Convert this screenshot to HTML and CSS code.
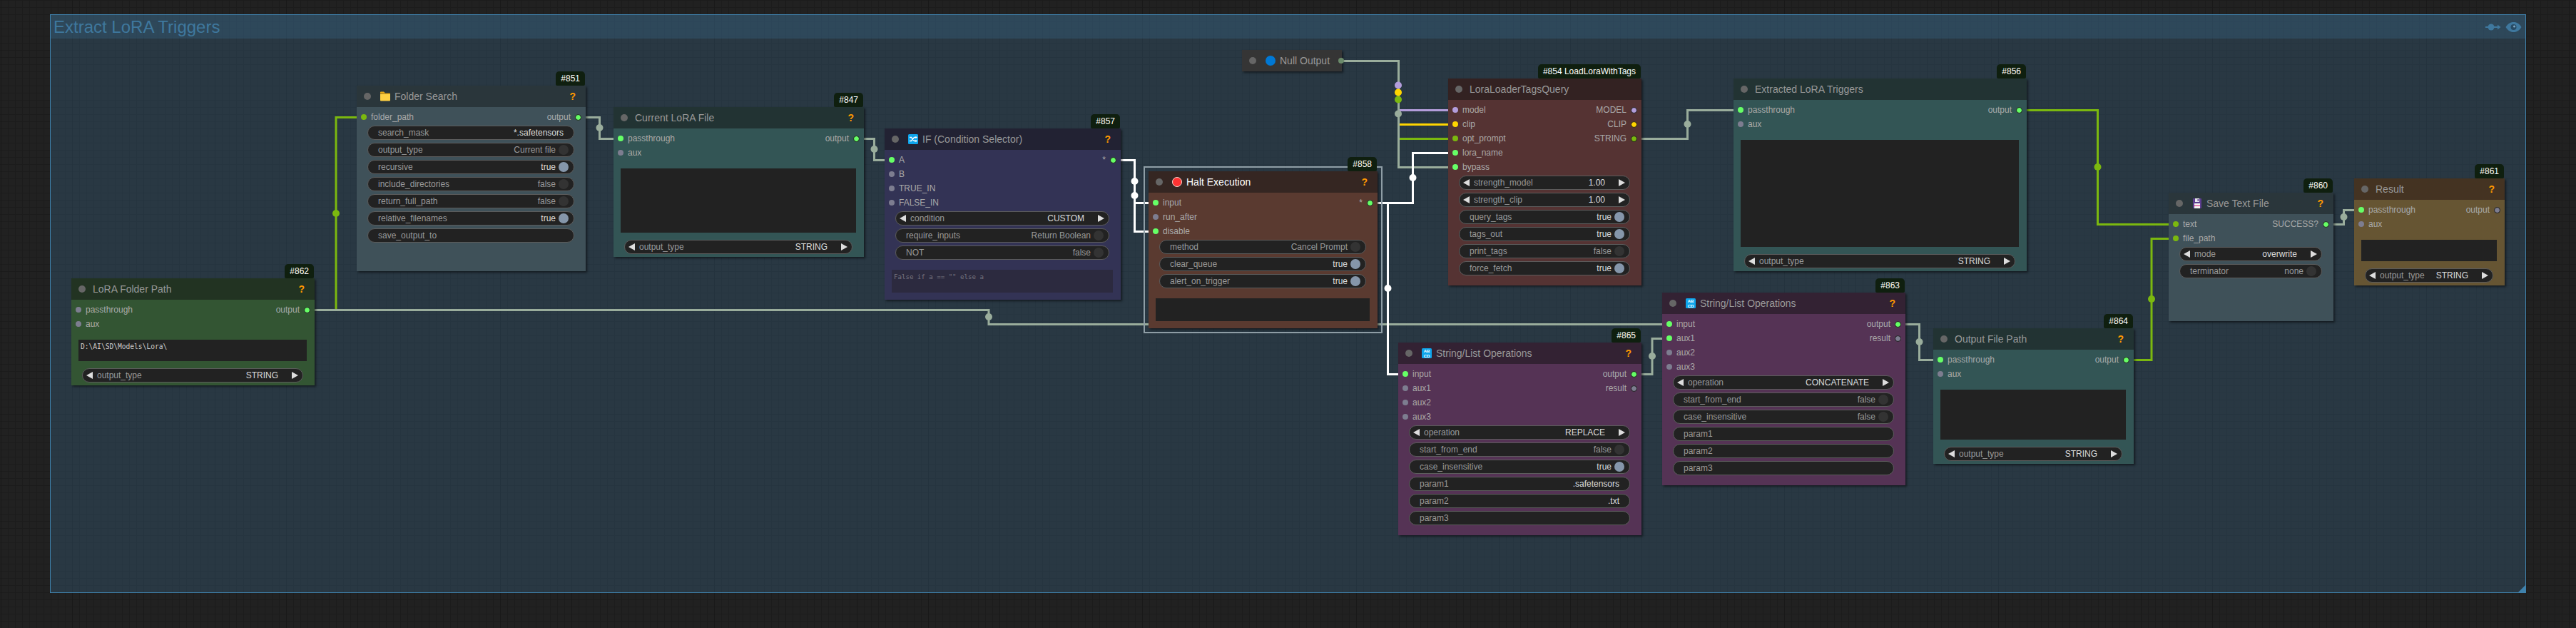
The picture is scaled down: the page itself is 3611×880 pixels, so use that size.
FILE: index.html
```html
<!DOCTYPE html>
<html lang="en">
<head>
    <meta charset="UTF-8">
    <title>Extract LoRA Triggers</title>
    <link rel="stylesheet" href="styles.css">
</head>
<body>
<main class="canvas">

    <section class="group">
        <div class="group-title">
            <span>Extract LoRA Triggers</span>
            <span class="group-icons">
                <svg width="22" height="12" viewBox="0 0 22 12"><path d="M0 6H20" stroke="#3f789e" stroke-width="2"/><circle cx="8" cy="6" r="4.5" fill="#3f789e"/><path d="M17 2.5L21.500 6L17 9.500Z" fill="#3f789e"/></svg>
                <svg width="23" height="16" viewBox="0 0 23 16"><path d="M0.500 8C4 2.500 8 1 11.500 1S19 2.500 22.500 8C19 13.500 15 15 11.500 15S4 13.500 0.500 8Z" fill="#3f789e"/><circle cx="11.500" cy="8" r="4" fill="#274a63"/><circle cx="12.500" cy="7" r="1.500" fill="#7fa8c4"/></svg>
            </span>
        </div>
    </section>

    <!-- links are drawn under the nodes -->
    <svg class="wires" width="3611" height="880" viewBox="0 0 3611 880">
        <path class="wire green" d="M441 434.500H471V164.500H500"/>
        <circle class="mid green" cx="471" cy="299" r="5"/>
        <path class="wire grey" d="M441 434.500H1386V454.500H2330"/>
        <circle class="mid grey" cx="1386" cy="444" r="5"/>
        <path class="wire grey" d="M821 164.500H840.500V194.500H860"/>
        <circle class="mid grey" cx="840.500" cy="179" r="5"/>
        <path class="wire grey" d="M1211 194.500H1225.500V224.500H1240"/>
        <circle class="mid grey" cx="1225.500" cy="209" r="5"/>

        <path class="wire white" d="M1571 224.500H1590.500V284.500H1610"/>
        <path class="wire white" d="M1571 224.500H1590.500V324.500H1610"/>
        <circle class="mid white" cx="1590.500" cy="254" r="5"/>
        <circle class="mid white" cx="1590.500" cy="274" r="5"/>

        <path class="wire purple" d="M1881 85.500H1960.500V154.500H2030"/>
        <path class="wire yellow" d="M1881 85.500H1960.500V174.500H2030"/>
        <path class="wire green" d="M1881 85.500H1960.500V194.500H2030"/>
        <path class="wire grey" d="M1881 85.500H1960.500V234.500H2030"/>
        <circle class="mid purple" cx="1960" cy="119.500" r="5"/>
        <circle class="mid yellow" cx="1960" cy="129.500" r="5"/>
        <circle class="mid green" cx="1960" cy="139.500" r="5"/>
        <circle class="mid grey" cx="1960" cy="159.500" r="5"/>

        <path class="wire white" d="M1931 284.500H1980.500V214.500H2030"/>
        <circle class="mid white" cx="1980.500" cy="249" r="5"/>
        <path class="wire white" d="M1931 284.500H1945.500V524.500H1960"/>
        <circle class="mid white" cx="1945.500" cy="404" r="5"/>

        <path class="wire grey" d="M2301 194.500H2365.500V154.500H2430"/>
        <circle class="mid grey" cx="2365.500" cy="174" r="5"/>
        <path class="wire green" d="M2841 154.500H2940.500V314.500H3040"/>
        <circle class="mid green" cx="2940.500" cy="234" r="5"/>
        <path class="wire grey" d="M2301 524.500H2316V474.500H2330"/>
        <circle class="mid grey" cx="2316" cy="499" r="5"/>
        <path class="wire grey" d="M2671 454.500H2690.500V504.500H2710"/>
        <circle class="mid grey" cx="2690.500" cy="479" r="5"/>
        <path class="wire green" d="M2991 504.500H3016V334.500H3040"/>
        <circle class="mid green" cx="3016" cy="419" r="5"/>
        <path class="wire grey" d="M3271 314.500H3285.500V294.500H3300"/>
        <circle class="mid grey" cx="3285.500" cy="304" r="5"/>
    </svg>

    <!-- #862 -->
    <article class="node c-green n862">
        <span class="badge">#862</span>
        <header class="node-title"><i class="title-dot"></i><span>LoRA Folder Path</span><b class="help">?</b></header>
        <div class="slots">
            <div class="slot"><i class="pin off"></i><span>passthrough</span><span class="out-label">output</span><i class="pin live out"></i></div>
            <div class="slot"><i class="pin off"></i><span>aux</span></div>
        </div>
        <div class="textbox">D:\AI\SD\Models\Lora\</div>
        <div class="widgets after-text">
            <div class="w combo"><span>output_type</span><span class="val">STRING</span></div>
        </div>
    </article>

    <!-- #851 -->
    <article class="node c-pale n851">
        <span class="badge">#851</span>
        <header class="node-title"><i class="title-dot"></i>
            <svg class="emoji" viewBox="0 0 14 14"><path d="M0 3.500V1.500Q0 .5 1 .5H5L7 2.500H13Q14 2.500 14 3.500V4Z" fill="#e8a917"/><path d="M0 4H14V12.500Q14 13.500 13 13.500H1Q0 13.500 0 12.500Z" fill="#ffd042"/></svg>
            <span>Folder Search</span><b class="help">?</b></header>
        <div class="slots">
            <div class="slot"><i class="pin str"></i><span>folder_path</span><span class="out-label">output</span><i class="pin live out"></i></div>
        </div>
        <div class="widgets">
            <div class="w text"><span>search_mask</span><span class="val">*.safetensors</span></div>
            <div class="w toggle"><span>output_type</span><span class="val dim">Current file</span><i class="knob"></i></div>
            <div class="w toggle"><span>recursive</span><span class="val">true</span><i class="knob on"></i></div>
            <div class="w toggle"><span>include_directories</span><span class="val dim">false</span><i class="knob"></i></div>
            <div class="w toggle"><span>return_full_path</span><span class="val dim">false</span><i class="knob"></i></div>
            <div class="w toggle"><span>relative_filenames</span><span class="val">true</span><i class="knob on"></i></div>
            <div class="w text"><span>save_output_to</span></div>
        </div>
    </article>

    <!-- #847 -->
    <article class="node c-cyan n847">
        <span class="badge">#847</span>
        <header class="node-title"><i class="title-dot"></i><span>Current LoRA File</span><b class="help">?</b></header>
        <div class="slots">
            <div class="slot"><i class="pin live"></i><span>passthrough</span><span class="out-label">output</span><i class="pin live out"></i></div>
            <div class="slot"><i class="pin off"></i><span>aux</span></div>
        </div>
        <div class="textbox"></div>
        <div class="widgets after-text">
            <div class="w combo"><span>output_type</span><span class="val">STRING</span></div>
        </div>
    </article>

    <!-- #857 -->
    <article class="node c-blue n857">
        <span class="badge">#857</span>
        <header class="node-title"><i class="title-dot"></i>
            <svg class="emoji" viewBox="0 0 14 14"><rect width="14" height="14" rx="1.500" fill="#0ea5ec"/><path d="M2 4.500H4.500L8.500 9.500H11M2 9.500H4.500L8.500 4.500H11" stroke="#fff" stroke-width="1.300" fill="none"/><path d="M10.500 2.800L13 4.500L10.500 6.200ZM10.500 7.800L13 9.500L10.500 11.200Z" fill="#fff"/></svg>
            <span>IF (Condition Selector)</span><b class="help">?</b></header>
        <div class="slots">
            <div class="slot"><i class="pin live"></i><span>A</span><span class="out-label">*</span><i class="pin live out"></i></div>
            <div class="slot"><i class="pin off"></i><span>B</span></div>
            <div class="slot"><i class="pin off"></i><span>TRUE_IN</span></div>
            <div class="slot"><i class="pin off"></i><span>FALSE_IN</span></div>
        </div>
        <div class="widgets">
            <div class="w combo"><span>condition</span><span class="val">CUSTOM</span></div>
            <div class="w toggle"><span>require_inputs</span><span class="val dim">Return Boolean</span><i class="knob"></i></div>
            <div class="w toggle"><span>NOT</span><span class="val dim">false</span><i class="knob"></i></div>
        </div>
        <div class="textbox after-widgets faded">False if a == "" else a</div>
    </article>

    <!-- #858, selected -->
    <div class="selection"></div>
    <article class="node c-halt n858">
        <span class="badge">#858</span>
        <header class="node-title"><i class="title-dot"></i>
            <svg class="emoji" viewBox="0 0 14 14"><circle cx="7" cy="7" r="6.500" fill="#f33" stroke="#f3d9d0" stroke-width="1"/></svg>
            <span class="selected-title">Halt Execution</span><b class="help">?</b></header>
        <div class="slots">
            <div class="slot"><i class="pin live"></i><span>input</span><span class="out-label">*</span><i class="pin live out"></i></div>
            <div class="slot"><i class="pin off"></i><span>run_after</span></div>
            <div class="slot"><i class="pin live"></i><span>disable</span></div>
        </div>
        <div class="widgets">
            <div class="w toggle"><span>method</span><span class="val dim">Cancel Prompt</span><i class="knob"></i></div>
            <div class="w toggle"><span>clear_queue</span><span class="val">true</span><i class="knob on"></i></div>
            <div class="w toggle"><span>alert_on_trigger</span><span class="val">true</span><i class="knob on"></i></div>
        </div>
        <div class="textbox after-widgets"></div>
    </article>

    <!-- collapsed null node -->
    <article class="node collapsed n-null">
        <header class="node-title"><i class="title-dot"></i>
            <svg class="emoji" viewBox="0 0 14 14"><circle cx="7" cy="7" r="7" fill="#0078d4"/></svg>
            <span>Null Output</span></header>
        <i class="pin null-pin"></i>
    </article>

    <!-- #854 -->
    <article class="node c-red n854">
        <span class="badge">#854 LoadLoraWithTags</span>
        <header class="node-title"><i class="title-dot"></i><span>LoraLoaderTagsQuery</span></header>
        <div class="slots">
            <div class="slot"><i class="pin model"></i><span>model</span><span class="out-label">MODEL</span><i class="pin model out"></i></div>
            <div class="slot"><i class="pin clip"></i><span>clip</span><span class="out-label">CLIP</span><i class="pin clip out"></i></div>
            <div class="slot"><i class="pin str"></i><span>opt_prompt</span><span class="out-label">STRING</span><i class="pin str out"></i></div>
            <div class="slot"><i class="pin live"></i><span>lora_name</span></div>
            <div class="slot"><i class="pin live"></i><span>bypass</span></div>
        </div>
        <div class="widgets">
            <div class="w combo"><span>strength_model</span><span class="val">1.00</span></div>
            <div class="w combo"><span>strength_clip</span><span class="val">1.00</span></div>
            <div class="w toggle"><span>query_tags</span><span class="val">true</span><i class="knob on"></i></div>
            <div class="w toggle"><span>tags_out</span><span class="val">true</span><i class="knob on"></i></div>
            <div class="w toggle"><span>print_tags</span><span class="val dim">false</span><i class="knob"></i></div>
            <div class="w toggle"><span>force_fetch</span><span class="val">true</span><i class="knob on"></i></div>
        </div>
    </article>

    <!-- #856 -->
    <article class="node c-cyan n856">
        <span class="badge">#856</span>
        <header class="node-title"><i class="title-dot"></i><span>Extracted LoRA Triggers</span></header>
        <div class="slots">
            <div class="slot"><i class="pin live"></i><span>passthrough</span><span class="out-label">output</span><i class="pin live out"></i></div>
            <div class="slot"><i class="pin off"></i><span>aux</span></div>
        </div>
        <div class="textbox"></div>
        <div class="widgets after-text">
            <div class="w combo"><span>output_type</span><span class="val">STRING</span></div>
        </div>
    </article>

    <!-- #865 -->
    <article class="node c-purple n865">
        <span class="badge">#865</span>
        <header class="node-title"><i class="title-dot"></i>
            <svg class="emoji" viewBox="0 0 14 14"><rect width="14" height="14" rx="1.500" fill="#0ea5ec"/><text class="emoji-text" x="7" y="6.200">AB</text><text class="emoji-text" x="7" y="12.700">CD</text></svg>
            <span>String/List Operations</span><b class="help">?</b></header>
        <div class="slots">
            <div class="slot"><i class="pin live"></i><span>input</span><span class="out-label">output</span><i class="pin live out"></i></div>
            <div class="slot"><i class="pin off"></i><span>aux1</span><span class="out-label">result</span><i class="pin off out"></i></div>
            <div class="slot"><i class="pin off"></i><span>aux2</span></div>
            <div class="slot"><i class="pin off"></i><span>aux3</span></div>
        </div>
        <div class="widgets">
            <div class="w combo"><span>operation</span><span class="val">REPLACE</span></div>
            <div class="w toggle"><span>start_from_end</span><span class="val dim">false</span><i class="knob"></i></div>
            <div class="w toggle"><span>case_insensitive</span><span class="val">true</span><i class="knob on"></i></div>
            <div class="w text"><span>param1</span><span class="val">.safetensors</span></div>
            <div class="w text"><span>param2</span><span class="val">.txt</span></div>
            <div class="w text"><span>param3</span></div>
        </div>
    </article>

    <!-- #863 -->
    <article class="node c-purple n863">
        <span class="badge">#863</span>
        <header class="node-title"><i class="title-dot"></i>
            <svg class="emoji" viewBox="0 0 14 14"><rect width="14" height="14" rx="1.500" fill="#0ea5ec"/><text class="emoji-text" x="7" y="6.200">AB</text><text class="emoji-text" x="7" y="12.700">CD</text></svg>
            <span>String/List Operations</span><b class="help">?</b></header>
        <div class="slots">
            <div class="slot"><i class="pin live"></i><span>input</span><span class="out-label">output</span><i class="pin live out"></i></div>
            <div class="slot"><i class="pin live"></i><span>aux1</span><span class="out-label">result</span><i class="pin off out"></i></div>
            <div class="slot"><i class="pin off"></i><span>aux2</span></div>
            <div class="slot"><i class="pin off"></i><span>aux3</span></div>
        </div>
        <div class="widgets">
            <div class="w combo"><span>operation</span><span class="val">CONCATENATE</span></div>
            <div class="w toggle"><span>start_from_end</span><span class="val dim">false</span><i class="knob"></i></div>
            <div class="w toggle"><span>case_insensitive</span><span class="val dim">false</span><i class="knob"></i></div>
            <div class="w text"><span>param1</span></div>
            <div class="w text"><span>param2</span></div>
            <div class="w text"><span>param3</span></div>
        </div>
    </article>

    <!-- #864 -->
    <article class="node c-cyan n864">
        <span class="badge">#864</span>
        <header class="node-title"><i class="title-dot"></i><span>Output File Path</span><b class="help">?</b></header>
        <div class="slots">
            <div class="slot"><i class="pin live"></i><span>passthrough</span><span class="out-label">output</span><i class="pin live out"></i></div>
            <div class="slot"><i class="pin off"></i><span>aux</span></div>
        </div>
        <div class="textbox"></div>
        <div class="widgets after-text">
            <div class="w combo"><span>output_type</span><span class="val">STRING</span></div>
        </div>
    </article>

    <!-- #860 -->
    <article class="node c-pale n860">
        <span class="badge">#860</span>
        <header class="node-title"><i class="title-dot"></i>
            <svg class="emoji" viewBox="0 0 14 14"><rect x="1" y="0" width="12" height="14" rx="1" fill="#5c3d8f"/><rect x="3" y="7" width="8" height="7" fill="#f4f4f4"/><rect x="3" y="9.500" width="8" height="1.500" fill="#e0569a"/><rect x="4" y="0" width="6" height="5" fill="#e8e8ee"/><rect x="7.500" y="1" width="1.500" height="3" fill="#5c3d8f"/></svg>
            <span>Save Text File</span><b class="help">?</b></header>
        <div class="slots">
            <div class="slot"><i class="pin str"></i><span>text</span><span class="out-label">SUCCESS?</span><i class="pin live out"></i></div>
            <div class="slot"><i class="pin str"></i><span>file_path</span></div>
        </div>
        <div class="widgets">
            <div class="w combo"><span>mode</span><span class="val">overwrite</span></div>
            <div class="w toggle"><span>terminator</span><span class="val dim">none</span><i class="knob"></i></div>
        </div>
    </article>

    <!-- #861 -->
    <article class="node c-yellow n861">
        <span class="badge">#861</span>
        <header class="node-title"><i class="title-dot"></i><span>Result</span><b class="help">?</b></header>
        <div class="slots">
            <div class="slot"><i class="pin live"></i><span>passthrough</span><span class="out-label">output</span><i class="pin off out"></i></div>
            <div class="slot"><i class="pin off"></i><span>aux</span></div>
        </div>
        <div class="textbox"></div>
        <div class="widgets after-text">
            <div class="w combo"><span>output_type</span><span class="val">STRING</span></div>
        </div>
    </article>

</main>
</body>
</html>
```
FILE: styles.css
```css
* {
    box-sizing: border-box;
}
body {
    margin: 0;
    background-color: #212121;
    font-family: "Liberation Sans", Arial, sans-serif;
    font-size: 12px;
    color: #999;
}
.canvas {
    position: relative;
    width: 3611px;
    height: 880px;
    overflow: hidden;
    background-color: #212121;
    background-image:
        linear-gradient(to right, #191919 1px, transparent 1px),
        linear-gradient(to bottom, #1b1b1b 1px, transparent 1px),
        linear-gradient(to right, #1c1c1c 1px, transparent 1px),
        linear-gradient(to bottom, #1c1c1c 1px, transparent 1px);
    background-size: 100px 100px, 100px 100px, 10px 10px, 10px 10px;
    background-position: 1px 0, 0 80px, 1px 0, 0 0;
}

/* group frame */
.group {
    position: absolute;
    left: 70px;
    top: 20px;
    width: 3471px;
    height: 811px;
    background-color: rgba(63, 120, 158, 0.28);
    border: 1px solid #3f82ad;
}
.group::after {
    content: "";
    position: absolute;
    right: 0;
    bottom: 0;
    width: 10px;
    height: 10px;
    background-color: #3f82ad;
    clip-path: polygon(100% 0, 100% 100%, 0 100%);
}
.group-title {
    display: flex;
    align-items: center;
    justify-content: space-between;
    height: 33px;
    padding: 0 5px 0 4px;
    background-color: rgba(63, 120, 158, 0.25);
    color: #3f789e;
    font-size: 24px;
    line-height: 30px;
}
.group-icons {
    display: flex;
    align-items: center;
    gap: 6px;
}

/* links */
.wires {
    position: absolute;
    left: 0;
    top: 0;
}
.wire {
    fill: none;
    stroke-width: 3;
}
.wire.green { stroke: #7bb80f; }
.wire.grey { stroke: #9aad9c; }
.wire.white { stroke: #fff; }
.wire.purple { stroke: #b39ddb; }
.wire.yellow { stroke: #ffd500; }
.mid.green { fill: #7bb80f; }
.mid.grey { fill: #9aad9c; }
.mid.white { fill: #fff; }
.mid.purple { fill: #b39ddb; }
.mid.yellow { fill: #ffd500; }

/* nodes */
.node {
    position: absolute;
    box-shadow: 2px 2px 3px rgba(0, 0, 0, 0.5);
}
.n862 { left: 100px; top: 390px; width: 341px; height: 150px; }
.n851 { left: 500px; top: 120px; width: 321px; height: 260px; }
.n847 { left: 860px; top: 150px; width: 351px; height: 210px; }
.n857 { left: 1240px; top: 180px; width: 331px; height: 240px; }
.n858 { left: 1610px; top: 240px; width: 321px; height: 220px; }
.n854 { left: 2030px; top: 110px; width: 271px; height: 290px; }
.n856 { left: 2430px; top: 110px; width: 411px; height: 270px; }
.n865 { left: 1960px; top: 480px; width: 341px; height: 270px; }
.n863 { left: 2330px; top: 410px; width: 341px; height: 270px; }
.n864 { left: 2710px; top: 460px; width: 281px; height: 190px; }
.n860 { left: 3040px; top: 270px; width: 231px; height: 180px; }
.n861 { left: 3300px; top: 250px; width: 211px; height: 150px; }
.n-null { left: 1741px; top: 70px; width: 140px; height: 30px; background-color: #353535; }

.c-green { background-color: #335533; }
.c-green .node-title { background-color: #223322; }
.c-pale { background-color: #3f5159; }
.c-pale .node-title { background-color: #2a363b; }
.c-cyan { background-color: #335555; }
.c-cyan .node-title { background-color: #223333; }
.c-blue { background-color: #333355; }
.c-blue .node-title { background-color: #222233; }
.c-halt { background-color: #5a3a30; }
.c-halt .node-title { background-color: #352622; }
.c-red { background-color: #553333; }
.c-red .node-title { background-color: #332222; }
.c-purple { background-color: #553355; }
.c-purple .node-title { background-color: #332233; }
.c-yellow { background-color: #665533; }
.c-yellow .node-title { background-color: #443322; }

.selection {
    position: absolute;
    left: 1603px;
    top: 233px;
    width: 335px;
    height: 234px;
    border: 2px solid #8f9ea6;
}

.badge {
    position: absolute;
    right: 1px;
    top: -20px;
    height: 20px;
    padding: 0 7px;
    border-radius: 5px 5px 2px 2px;
    background-color: #0f1f0f;
    color: #fff;
    line-height: 20px;
    white-space: nowrap;
}

.node-title {
    display: flex;
    align-items: center;
    height: 30px;
    padding: 0 14px 0 10px;
    font-size: 14px;
    color: #999;
}
.title-dot {
    width: 10px;
    height: 10px;
    margin-right: 10px;
    border-radius: 50%;
    background-color: #666;
}
.emoji {
    width: 14px;
    height: 14px;
    margin: 0 6px 0 3px;
    flex: none;
}
.emoji-text {
    font-family: "Liberation Sans", Arial, sans-serif;
    font-size: 6px;
    font-weight: bold;
    fill: #fff;
    text-anchor: middle;
}
.selected-title {
    color: #fff;
}
.help {
    margin-left: auto;
    color: #f90;
    font-size: 14px;
}
.null-pin {
    position: absolute;
    right: -3px;
    top: 11px;
    background-color: #6a8a6a;
}

/* slots */
.slots {
    padding-top: 4px;
}
.slot {
    display: flex;
    align-items: center;
    gap: 6px;
    height: 20px;
    padding: 0 6px;
    color: #aaa;
}
.out-label {
    margin-left: auto;
}
.pin {
    display: block;
    flex: none;
    width: 8px;
    height: 8px;
    border-radius: 50%;
}
.pin.out {
    width: 9px;
    height: 9px;
    border: 1px solid #1c1c1c;
}
.pin.live { background-color: #66ff66; }
.pin.off { background-color: #7d7d90; }
.pin.str { background-color: #7bb80f; }
.pin.model { background-color: #b39ddb; }
.pin.clip { background-color: #ffd500; }

/* widgets */
.widgets {
    display: flex;
    flex-direction: column;
    gap: 4px;
    margin: 2px 16px 0 15px;
}
.widgets.after-text {
    margin-top: 10px;
}
.w {
    display: flex;
    align-items: center;
    height: 20px;
    border: 1px solid #5c5c5c;
    border-radius: 10px;
    background-color: #222;
    color: #999;
    white-space: nowrap;
}
.val {
    margin-left: auto;
    color: #ddd;
}
.val.dim {
    color: #999;
}
.w.text {
    padding: 0 14px;
}
.w.toggle {
    padding: 0 7px 0 14px;
}
.knob {
    flex: none;
    width: 14px;
    height: 14px;
    margin-left: 4px;
    border-radius: 50%;
    background-color: #333;
}
.knob.on {
    background-color: #8596aa;
}
.w.combo {
    padding: 0 6px 0 5px;
}
.w.combo::before {
    content: "";
    margin-right: 6px;
    border-style: solid;
    border-width: 5px 9px 5px 0;
    border-color: transparent #ddd transparent transparent;
}
.w.combo::after {
    content: "";
    margin-left: 19px;
    border-style: solid;
    border-width: 5px 0 5px 9px;
    border-color: transparent transparent transparent #ddd;
}

/* multiline text boxes */
.textbox {
    margin: 12px 11px 0 10px;
    padding: 4px 3px;
    background-color: #222;
    color: #ccc;
    font-family: "DejaVu Sans Mono", "Liberation Mono", monospace;
    font-size: 9.6px;
    line-height: 12px;
}
.textbox.after-widgets {
    margin-top: 14px;
    height: 32px;
}
.textbox.faded {
    background-color: #2c2a3f;
    color: #77757f;
    font-size: 9.1px;
}
.n862 .textbox { height: 30px; }
.n847 .textbox { height: 90px; }
.n856 .textbox { height: 150px; }
.n864 .textbox { height: 70px; }
.n861 .textbox { height: 30px; }
```
